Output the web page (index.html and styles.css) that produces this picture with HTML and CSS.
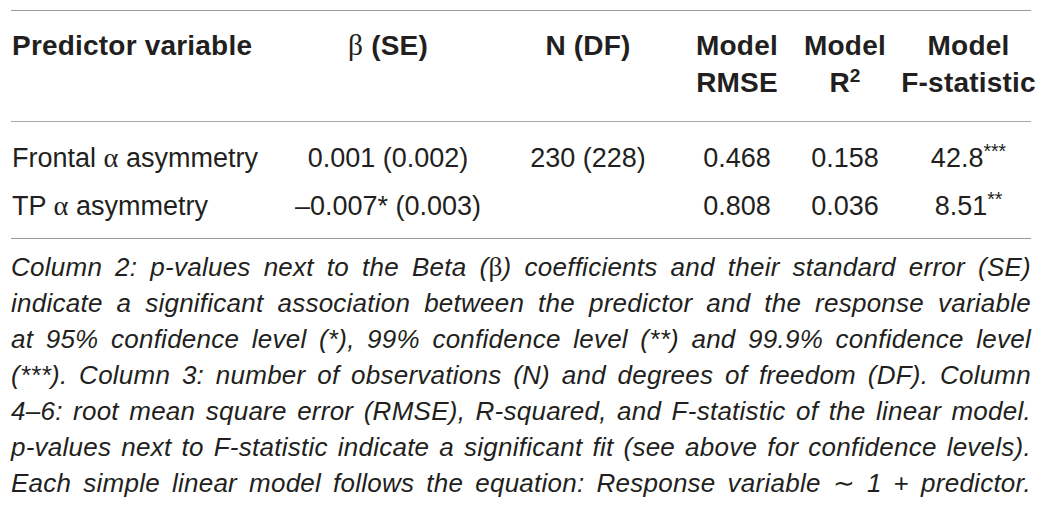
FILE: index.html
```html
<!DOCTYPE html>
<html lang="en">
<head>
    <meta charset="UTF-8">
    <meta name="viewport" content="width=device-width, initial-scale=1.0">
    <title>Table - alpha asymmetry models</title>
    <link rel="stylesheet" href="styles.css">
</head>
<body>

    <div class="table-wrap">
        <div class="row head-row">
            <div class="cell first">Predictor variable</div>
            <div class="cell"><span class="greek">β</span> (SE)</div>
            <div class="cell">N (DF)</div>
            <div class="cell">Model<br>RMSE</div>
            <div class="cell">Model<br>R<sup>2</sup></div>
            <div class="cell">Model<br>F-statistic</div>
        </div>

        <div class="body-rows">
            <div class="row">
                <div class="cell first">Frontal <span class="greek">α</span> asymmetry</div>
                <div class="cell">0.001 (0.002)</div>
                <div class="cell">230 (228)</div>
                <div class="cell">0.468</div>
                <div class="cell">0.158</div>
                <div class="cell">42.8<sup class="stars">***</sup></div>
            </div>
            <div class="row">
                <div class="cell first">TP <span class="greek">α</span> asymmetry</div>
                <div class="cell">–0.007* (0.003)</div>
                <div class="cell"></div>
                <div class="cell">0.808</div>
                <div class="cell">0.036</div>
                <div class="cell">8.51<sup class="stars">**</sup></div>
            </div>
        </div>
    </div>

    <!-- table footnote, one line per <br> so every line justifies -->
    <p class="caption">
        Column 2: p-values next to the Beta (<span class="greek">β</span>) coefficients and their standard error (SE)<br>
        indicate a significant association between the predictor and the response variable<br>
        at 95% confidence level (*), 99% confidence level (**) and 99.9% confidence level<br>
        (***). Column 3: number of observations (N) and degrees of freedom (DF). Column<br>
        4–6: root mean square error (RMSE), R-squared, and F-statistic of the linear model.<br>
        p-values next to F-statistic indicate a significant fit (see above for confidence levels).<br>
        Each simple linear model follows the equation: Response variable <span class="upright">∼</span> 1 <span class="upright">+</span> predictor.
    </p>

</body>
</html>
```

FILE: styles.css
```css
body {
    font-family: "Liberation Sans", Arial, sans-serif;
    margin: 0;
    padding: 10px 20px 0 11px;
    background-color: #fff;
    color: #231f20;
}

.table-wrap {
    width: 1020px;
    border-top: 1px solid #9a9a9a;
    border-bottom: 1px solid #9a9a9a;
}

.row {
    display: grid;
    grid-template-columns: 279px 196px 204px 94px 122px 125px;
    justify-items: center;
    text-align: center;
    white-space: nowrap;
}

.cell.first {
    justify-self: start;
    text-align: left;
    padding-left: 1px;
}

.head-row {
    font-size: 28px;
    font-weight: bold;
    line-height: 37px;
    letter-spacing: 0.2px;
    padding: 16px 0 20px;
    border-bottom: 1px solid #a8a8a8;
    align-items: start;
}

.head-row .greek {
    font-weight: normal;
}

sup {
    font-size: 0.68em;
    line-height: 0;
    vertical-align: 0.5em;
}

.stars {
    font-size: 0.72em;
    vertical-align: 0.45em;
}

.body-rows {
    font-size: 27px;
    line-height: 48px;
    padding: 12px 0 8px;
}

.greek {
    font-family: "Liberation Serif", "Times New Roman", serif;
    font-size: 1.05em;
}

.caption {
    width: 1020px;
    margin: 10px 0 0;
    font-size: 26px;
    font-style: italic;
    line-height: 36px;
    letter-spacing: 0.25px;
    text-align: justify;
    text-align-last: justify;
}

.caption .greek {
    font-style: normal;
}

.upright {
    font-style: normal;
}
```
